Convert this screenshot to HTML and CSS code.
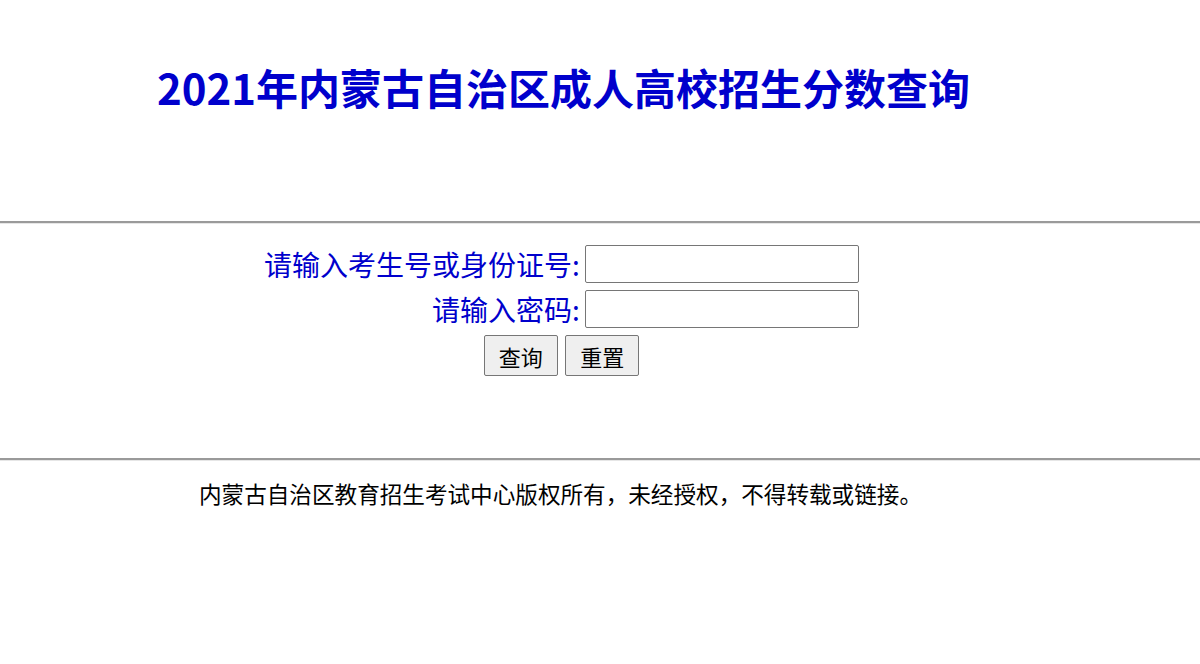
FILE: index.html
```html
<!DOCTYPE html>
<html lang="zh-CN">
<head>
  <meta charset="UTF-8" />
  <title>2021年内蒙古自治区成人高校招生分数查询</title>
  <link rel="stylesheet" href="styles.css">
</head>
<body>
  <div class="cabecera">
    <h1>2021年内蒙古自治区成人高校招生分数查询</h1>
  </div>
  <hr class="linea">
  <form class="consulta">
    <table class="tabla">
      <tr>
        <td class="etiqueta">请输入考生号或身份证号:</td>
        <td><input type="text" name="ksh"></td>
      </tr>
      <tr>
        <td class="etiqueta">请输入密码:</td>
        <td><input type="password" name="mm"></td>
      </tr>
      <tr>
        <td colspan="2" class="botones">
          <button type="submit">查询</button>
          <button type="reset">重置</button>
        </td>
      </tr>
    </table>
  </form>
  <hr class="linea">
  <p class="pie">内蒙古自治区教育招生考试中心版权所有，未经授权，不得转载或链接。</p>
</body>
</html>
```

FILE: styles.css
```css
body {
  margin: 0;
  padding: 0;
  background: #ffffff;
  font-family: "Noto Sans CJK SC", "Noto Sans", sans-serif;
}

.cabecera {
  height: 221px;
  padding-left: 157px;
  box-sizing: border-box;
  padding-top: 57px;
}

.cabecera h1 {
  margin: 0;
  font-size: 42px;
  line-height: 60px;
  font-weight: 700;
  color: #0000cc;
}

.linea {
  margin: 0;
  height: 0;
  border: none;
  border-top: 2px solid #9a9a9a;
  border-bottom: 1px solid #e6e6e6;
}

.consulta {
  width: 1123px;
  padding-top: 21px;
  height: 234px;
  box-sizing: border-box;
}

.tabla {
  margin: 0 auto;
  border-collapse: collapse;
}

.tabla td {
  padding: 0 0 7px 0;
}

.etiqueta {
  text-align: right;
  color: #0000cc;
  font-size: 28px;
  line-height: 30px;
  padding-right: 3px !important;
  white-space: nowrap;
}

.tabla input {
  width: 274px;
  height: 38px;
  margin: 0 0 0 2px;
  border: 1px solid #767676;
  border-radius: 2px;
  box-sizing: border-box;
  font-size: 20px;
  padding: 2px 4px;
  vertical-align: middle;
}

.botones {
  text-align: center;
  padding-top: 0 !important;
}

.botones button {
  width: 74px;
  height: 41px;
  font-size: 22px;
  font-family: "Noto Sans CJK SC", sans-serif;
  background: #efefef;
  border: 1px solid #767676;
  border-radius: 2px;
  padding: 0;
  margin: 0 2px;
  color: #000;
}

.pie {
  width: 1121px;
  margin: 0;
  padding-top: 18px;
  text-align: center;
  font-size: 22.6px;
  line-height: 30px;
  color: #000;
}
```
